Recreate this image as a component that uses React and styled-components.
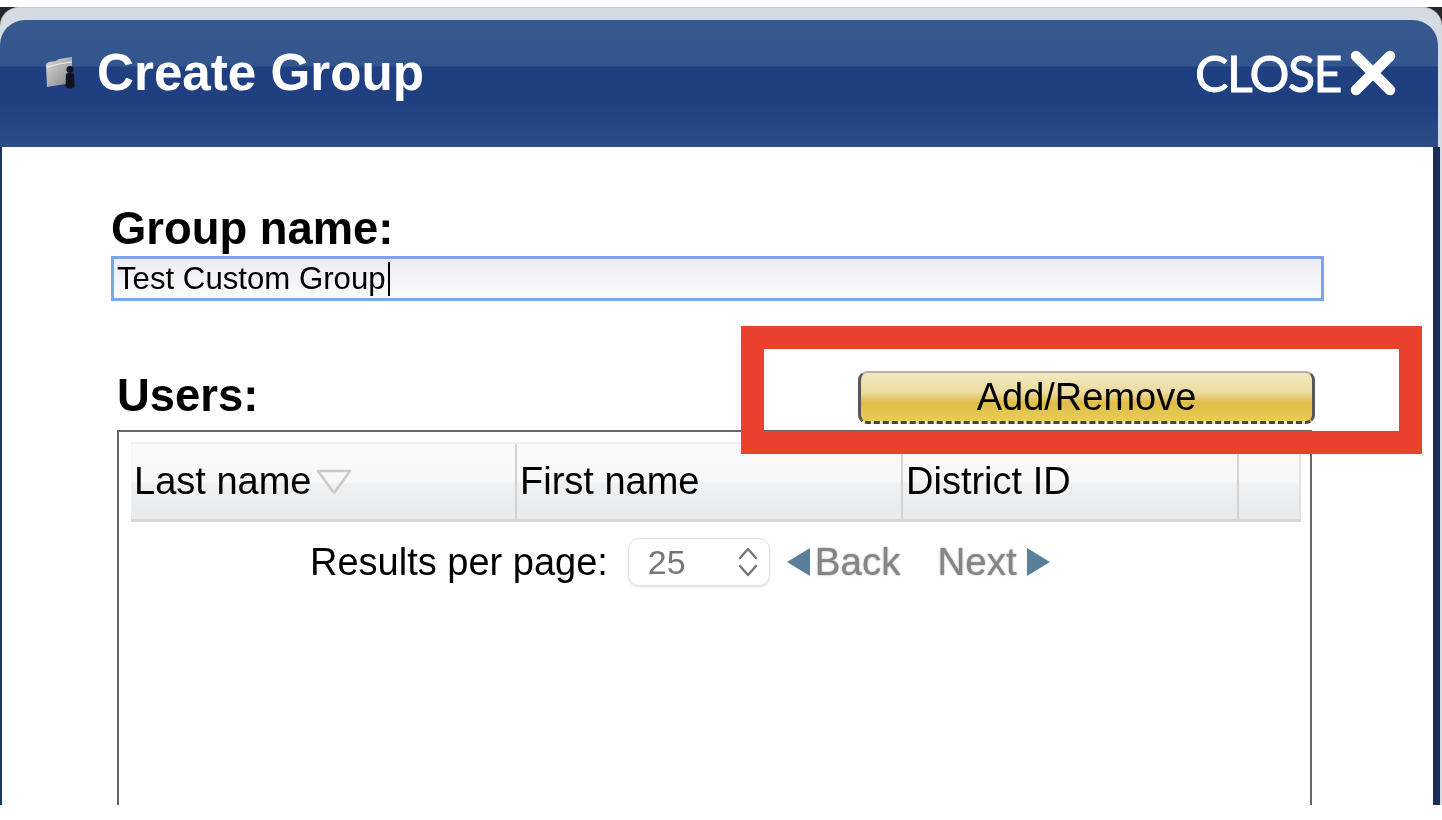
import React from 'react'
import styled, { createGlobalStyle } from 'styled-components';

const Global = createGlobalStyle`
html, body {
  margin: 0;
  padding: 0;
  background: #fff;
}
* { box-sizing: border-box; }
`;

const Page = styled.div`
position: relative;
width: 1442px;
height: 820px;
padding-top: 7px;
overflow: hidden;
font-family: "Liberation Sans", Arial, sans-serif;
color: #000;
`;

const Frame = styled.div`
width: 1442px;
height: 798px;
background: linear-gradient(180deg, #262626 0, #333 30px, #d5dbe3 30px);
filter: blur(0.45px);
`;

const Bezel = styled.div`
height: 100%;
padding: 13px 4px 0 0;
background: #d5dbe3;
border-top: 1px solid #c4c8ce;
border-radius: 19px 19px 0 0;
display: flex;
flex-direction: column;
`;

const Header = styled.div`
height: 127px;
margin-top: -1px;
flex-shrink: 0;
display: flex;
align-items: center;
justify-content: space-between;
padding: 0 42px 22px 45px;
border-radius: 25px 25px 0 0;
background: linear-gradient(180deg, #38598f 0, #33558d 46px, #1f3f80 47px, #1f3f80 82px, #2c4c88 127px);
color: #fff;
`;

const TitleGroup = styled.div`
display: flex;
align-items: center;
gap: 21px;
`;

const Title = styled.div`
font-size: 51.2px;
font-weight: 700;
line-height: 60px;
`;

const CloseButton = styled.div`
display: flex;
align-items: center;
gap: 9px;
`;

const CloseText = styled.div`
font-family: Lato, sans-serif;
font-size: 50px;
font-weight: 400;
line-height: 56px;
letter-spacing: -1.5px;
-webkit-text-stroke: 0.9px #fff;
`;

const Body = styled.div`
flex: 1;
min-height: 0;
margin-right: -2px;
background: #fff;
border-left: 2px solid #1c3560;
border-right: 7px solid #1a2f58;
padding: 57px 0 0 109px;
display: flex;
flex-direction: column;
`;

const Label = styled.div`
font-size: 45.4px;
font-weight: 700;
line-height: 50px;
`;

const NameInput = styled.div`
width: 1213px;
height: 45px;
margin-top: 2px;
padding-left: 3px;
border: 3px solid #7ba6ee;
background: linear-gradient(180deg, #ececf1 0, #f5f5f8 60%, #fbfbfc 100%);
font-size: 31.2px;
line-height: 41px;
display: flex;
align-items: center;
`;

const Caret = styled.span`
width: 2px;
height: 34px;
margin-left: 2px;
background: #000;
`;

const UsersRow = styled.div`
width: 1204px;
margin-top: 70px;
padding-left: 6px;
display: flex;
align-items: center;
justify-content: space-between;
`;

const UsersLabel = styled(Label)`
margin-top: -4px;
`;

const YellowButton = styled.div`
width: 457px;
height: 53px;
border: 3px solid #585858;
border-top: 2px solid #b0b0b0;
border-bottom: 3px dashed #444;
border-radius: 9px;
background: linear-gradient(180deg, #f3e7bd 0, #ecdca2 40%, #dfbd48 62%, #e7cd55 100%);
font-size: 38px;
line-height: 49px;
text-align: center;
`;

const TableBox = styled.div`
flex: 1;
min-height: 0;
width: 1195px;
margin: 6px 0 0 6px;
padding: 10px 9px 0 12px;
border: 2px solid #666;
border-bottom: 0;
`;

const HeadRow = styled.div`
display: grid;
grid-template-columns: 386px 386px 336px 62px;
height: 80px;
background: linear-gradient(180deg, #f9f9f9 0, #f8f8f8 50%, #eff0f1 54%, #e9eaec 100%);
border-top: 2px solid #f1f1f1;
border-bottom: 3px solid #d6d6d6;
`;

const HeadCell = styled.div`
display: flex;
align-items: center;
gap: 5px;
padding-left: 3px;
font-size: 38px;
border-right: ${({ $last }) => ($last ? '2px solid #e2e2e2' : '2px solid #d2d2d2')};
`;

const Pager = styled.div`
display: flex;
align-items: center;
height: 48px;
margin-top: 16px;
padding-left: 179px;
font-size: 38px;
`;

const PageSelect = styled.div`
width: 142px;
height: 48px;
margin: 0 17px 0 20px;
padding: 0 11px 0 19px;
border: 1px solid #e2e2e2;
border-radius: 11px;
box-shadow: 0 1px 2px rgba(0, 0, 0, 0.14);
display: flex;
align-items: center;
justify-content: space-between;
font-size: 34px;
color: #777;
`;

const PagerLink = styled.div`
display: flex;
align-items: center;
gap: ${({ $gap }) => $gap}px;
margin-right: ${({ $right }) => $right || 0}px;
font-size: 38.5px;
color: #858585;
text-shadow: 0 0 2px #8a8a8a;
`;

const Annotation = styled.div`
position: absolute;
left: 741px;
top: 326px;
width: 681px;
height: 128px;
border: 23px solid #e9412d;
`;

const FolderIcon = () => (
  <svg width="31" height="34" viewBox="0 0 31 34">
    <defs>
      <linearGradient id="folderFill" x1="0" y1="0" x2="1" y2="1">
        <stop offset="0" stopColor="#dcdcd8" />
        <stop offset="1" stopColor="#7f8486" />
      </linearGradient>
    </defs>
    <path d="M1 9 Q1 7 4 6 L11 5 L14 3 L27 1 L27 27 L2 31 Z" fill="url(#folderFill)" />
    <path d="M2 11 L14 8 L27 6" fill="none" stroke="#eeeeea" strokeWidth="1.2" />
    <circle cx="25" cy="13.5" r="3.6" fill="#10141f" />
    <path d="M21 18 Q25 15.5 29 18 L29.5 31 Q25 34 20.5 31 Z" fill="#10141f" />
  </svg>
);

const CloseIcon = () => (
  <svg width="46" height="46" viewBox="0 0 46 46">
    <path d="M6 6 L40 40 M40 6 L6 40" stroke="#fff" strokeWidth="10.5" strokeLinecap="round" />
  </svg>
);

const SortIcon = () => (
  <svg width="36" height="26" viewBox="0 0 36 26">
    <path d="M2 2 H34 L18 24 Z" fill="none" stroke="#c9c9c9" strokeWidth="2.5" strokeLinejoin="round" />
  </svg>
);

const UpDownIcon = () => (
  <svg width="20" height="32" viewBox="0 0 20 32">
    <path d="M2 12 L10 3 L18 12 M2 20 L10 29 L18 20" fill="none" stroke="#777" strokeWidth="2.4" strokeLinecap="round" strokeLinejoin="round" />
  </svg>
);

const ArrowIcon = ({ flip }) => (
  <svg width="24" height="28" viewBox="0 0 24 28">
    <path d={flip ? 'M1 0 L24 14 L1 28 Z' : 'M23 0 L0 14 L23 28 Z'} fill="#5b7f9b" />
  </svg>
);

const App = () => {
  return (
    <Page>
      <Global />
      <Frame>
        <Bezel>
          <Header>
            <TitleGroup>
              <FolderIcon />
              <Title>Create Group</Title>
            </TitleGroup>
            <CloseButton>
              <CloseText>CLOSE</CloseText>
              <CloseIcon />
            </CloseButton>
          </Header>
          <Body>
            <Label>Group name:</Label>
            <NameInput>Test Custom Group<Caret /></NameInput>
            <UsersRow>
              <UsersLabel>Users:</UsersLabel>
              <YellowButton>Add/Remove</YellowButton>
            </UsersRow>
            <TableBox>
              <HeadRow>
                <HeadCell>Last name<SortIcon /></HeadCell>
                <HeadCell>First name</HeadCell>
                <HeadCell>District ID</HeadCell>
                <HeadCell $last />
              </HeadRow>
              <Pager>
                Results per page:
                <PageSelect>25<UpDownIcon /></PageSelect>
                <PagerLink $gap={4} $right={37}><ArrowIcon />Back</PagerLink>
                <PagerLink $gap={9}>Next<ArrowIcon flip /></PagerLink>
              </Pager>
            </TableBox>
          </Body>
        </Bezel>
      </Frame>
      <Annotation />
    </Page>
  )
}

export default App
